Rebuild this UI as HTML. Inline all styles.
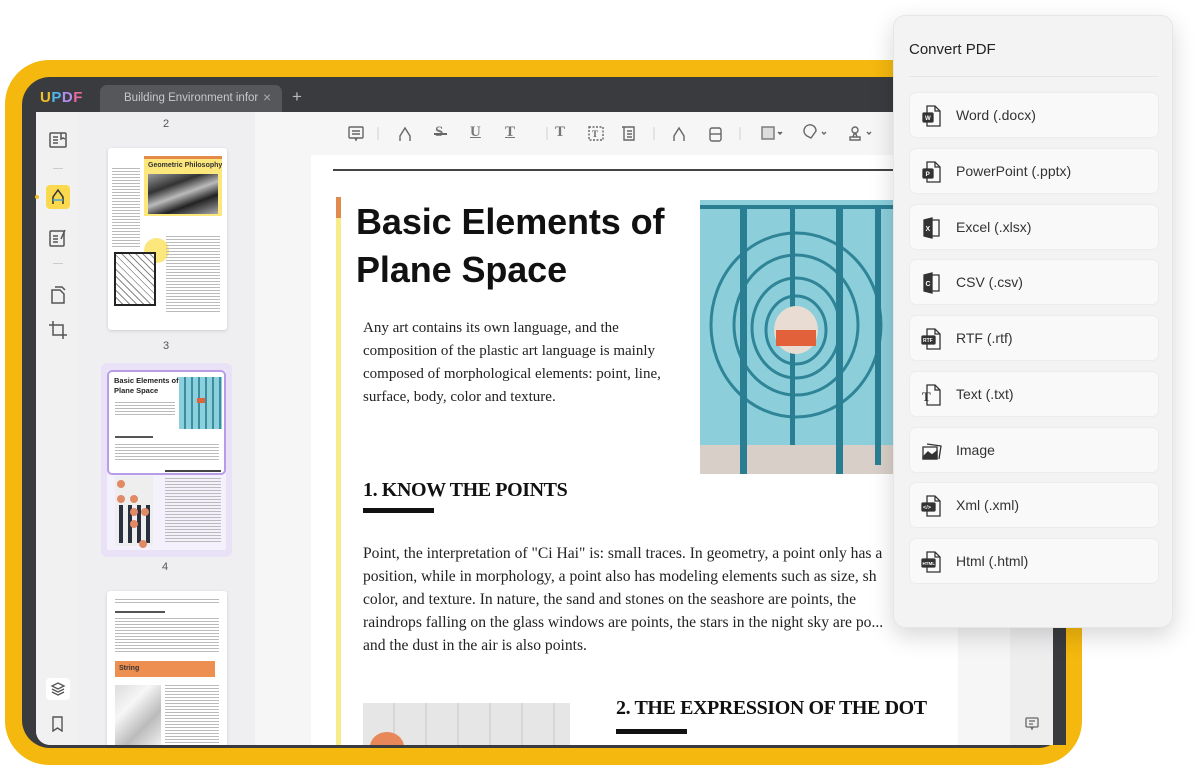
<!DOCTYPE html>
<html><head><meta charset="utf-8"><style>
*{margin:0;padding:0;box-sizing:border-box}
body{width:1200px;height:771px;background:#fff;position:relative;overflow:hidden;font-family:"Liberation Sans",sans-serif}
.a{position:absolute}
.frame{left:5px;top:60px;width:1077px;height:705px;background:#f4b80e;border-radius:44px}
.bezel{left:22px;top:77px;width:1044px;height:671px;background:#3a3b3e;border-radius:28px}
.content{left:36px;top:112px;width:1017px;height:633px;background:#f4f4f5;overflow:hidden;border-bottom-left-radius:14px}
.tl{background:#f1f1f2}
.thumbp{background:#efeff1}
.ser{font-family:"Liberation Serif","DejaVu Serif",serif;color:#222}
.item{position:absolute;left:15px;width:250px;height:46px;background:#f9f9f9;border-radius:7px;border:1px solid #ececec;font-size:14px;color:#333;line-height:44px;padding-left:46px}
.item svg{position:absolute;left:10px;top:11px}
.tb{position:absolute;top:124px;color:#777;font-size:15px;font-weight:bold;font-family:"Liberation Serif",serif}
.bars{background:repeating-linear-gradient(#bbb 0 1px,transparent 1px 3px)}
.h2{font-family:"Liberation Serif",serif;font-weight:bold;color:#111;white-space:nowrap;letter-spacing:-0.4px}
</style></head><body>
<div class="a frame"></div>
<div class="a bezel"></div>
<div class="a" style="left:40px;top:89px;font-size:15px;font-weight:bold;letter-spacing:0.5px"><span style="color:#f3c12b">U</span><span style="color:#4fb6f0">P</span><span style="color:#b38cf0">D</span><span style="color:#e86a9c">F</span></div>
<div class="a" style="left:100px;top:85px;width:182px;height:27px;background:#56575a;border-radius:7px 7px 0 0"></div>
<div class="a" style="left:124px;top:92px;font-size:11.5px;color:#c8c8c8;white-space:nowrap;width:134px;overflow:hidden">Building Environment infor</div>
<div class="a" style="left:263px;top:89px;font-size:14px;color:#aaa">×</div>
<div class="a" style="left:292px;top:87px;font-size:17px;color:#bbb">+</div>
<div class="a content">
  <div class="a tl" style="left:0;top:0;width:42px;height:633px"></div>
  <div class="a thumbp" style="left:42px;top:0;width:177px;height:633px"></div>
  <div class="a" style="left:219px;top:0;width:755px;height:43px;background:#f6f6f7"></div>
  <div class="a" style="left:219px;top:43px;width:56px;height:590px;background:#f6f6f7"></div>
  <div class="a" style="left:922px;top:43px;width:52px;height:590px;background:#f6f6f7"></div>
  <div class="a" style="left:974px;top:0;width:43px;height:633px;background:#eeeeef"></div>
</div>
<div class="a" style="left:1053px;top:112px;width:13px;height:633px;background:#3a3b3e"></div>
<svg class="a" style="left:48px;top:130px" width="20" height="20" viewBox="0 0 20 20" fill="none" stroke="#555" stroke-width="1.5"><rect x="2" y="3" width="16" height="14" rx="1"/><path d="M5 7h5M5 10h5M5 13h5M13 3v6l2-1 2 1"/></svg>
<div class="a" style="left:53px;top:168px;width:10px;height:1px;background:#ccc"></div>
<div class="a" style="left:46px;top:185px;width:24px;height:24px;background:#fbd94f;border-radius:4px"></div>
<svg class="a" style="left:50px;top:188px" width="16" height="18" viewBox="0 0 16 18" fill="none" stroke="#333" stroke-width="1.5"><path d="M3 16V9l5-7 5 7v7"/><path d="M3 12h10" stroke="#4aa7d6"/></svg>
<div class="a" style="left:35px;top:195px;width:4px;height:4px;border-radius:2px;background:#f4c21f"></div>
<svg class="a" style="left:48px;top:228px" width="20" height="20" viewBox="0 0 20 20" fill="none" stroke="#555" stroke-width="1.5"><rect x="2" y="3" width="14" height="15" rx="1"/><path d="M5 8h5M5 11h5M5 14h5M17 2l-4 9"/></svg>
<div class="a" style="left:53px;top:263px;width:10px;height:1px;background:#ccc"></div>
<svg class="a" style="left:48px;top:285px" width="20" height="20" viewBox="0 0 20 20" fill="none" stroke="#555" stroke-width="1.5"><path d="M4 5h8l4 4v9H4z"/><path d="M7 2h7l3 3"/></svg>
<svg class="a" style="left:48px;top:320px" width="20" height="20" viewBox="0 0 20 20" fill="none" stroke="#555" stroke-width="1.5"><path d="M5 1v14h14M1 5h14v14"/></svg>
<div class="a" style="left:46px;top:678px;width:24px;height:22px;background:#fff;border-radius:4px"></div>
<svg class="a" style="left:50px;top:681px" width="16" height="16" viewBox="0 0 16 16" fill="none" stroke="#555" stroke-width="1.3"><path d="M8 2l6 3-6 3-6-3zM2 8l6 3 6-3M2 11l6 3 6-3"/></svg>
<svg class="a" style="left:51px;top:716px" width="13" height="16" viewBox="0 0 13 16" fill="none" stroke="#555" stroke-width="1.4"><path d="M2 1h9v14l-4.5-3L2 15z"/></svg>
<div class="a" style="left:163px;top:118px;font-size:11px;color:#555">2</div>
<div class="a" style="left:108px;top:148px;width:119px;height:182px;background:#fff;border-radius:3px;box-shadow:0 1px 3px rgba(0,0,0,.15)">
  <div class="a" style="left:36px;top:8px;width:78px;height:60px;background:#fbe77c"></div>
  <div class="a" style="left:36px;top:8px;width:78px;height:3px;background:#e48a4b"></div>
  <div class="a" style="left:40px;top:14px;font-size:7px;font-weight:bold;color:#333">Geometric Philosophy</div>
  <div class="a" style="left:40px;top:26px;width:70px;height:40px;background:linear-gradient(160deg,#999,#333 30%,#bbb 50%,#222 70%,#aaa)"></div>
  <div class="a bars" style="left:4px;top:20px;width:28px;height:80px"></div>
  <div class="a" style="left:36px;top:90px;width:25px;height:25px;border-radius:50%;background:#fbe77c"></div>
  <div class="a" style="left:6px;top:104px;width:42px;height:54px;border:2px solid #222;background:repeating-linear-gradient(45deg,#fff 0 4px,#888 4px 5px)"></div>
  <div class="a bars" style="left:58px;top:88px;width:54px;height:78px"></div>
</div>
<div class="a" style="left:163px;top:340px;font-size:11px;color:#555">3</div>
<div class="a" style="left:101px;top:363px;width:131px;height:194px;background:#e9e2f7;border-radius:6px"></div>
<div class="a" style="left:107px;top:370px;width:119px;height:180px;background:#f4f0fc;border-radius:2px">
  <div class="a" style="left:0;top:0;width:119px;height:105px;background:#fff;border:2px solid #b79ce8;border-radius:5px"></div>
  <div class="a" style="left:7px;top:6px;font-size:7.5px;font-weight:bold;color:#222;line-height:10px">Basic Elements of<br>Plane Space</div>
  <div class="a" style="left:72px;top:7px;width:43px;height:52px;background:repeating-linear-gradient(90deg,#8cd0dd 0 5px,#3a8ea0 5px 7px)"></div>
  <div class="a" style="left:90px;top:28px;width:8px;height:5px;background:#e0643a"></div>
  <div class="a bars" style="left:8px;top:32px;width:60px;height:14px"></div>
  <div class="a" style="left:8px;top:66px;width:38px;height:2px;background:#555"></div>
  <div class="a bars" style="left:8px;top:74px;width:104px;height:18px"></div>
  <div class="a" style="left:58px;top:100px;width:56px;height:2px;background:#444"></div>
  <div class="a bars" style="left:58px;top:108px;width:56px;height:66px"></div>
  <div class="a" style="left:8px;top:106px;width:38px;height:70px;background:#eee"></div>
  <div class="a" style="left:12px;top:135px;width:4px;height:38px;background:#2b3040;box-shadow:9px 0 #2b3040,18px 0 #2b3040,27px 0 #2b3040"></div>
  <div class="a" style="left:10px;top:110px;width:8px;height:8px;border-radius:50%;background:#e08a66;box-shadow:0 15px #e08a66,13px 15px #e08a66,13px 28px #e08a66,24px 28px #e08a66,13px 40px #e08a66,22px 60px #e08a66"></div>
</div>
<div class="a" style="left:162px;top:561px;font-size:11px;color:#555">4</div>
<div class="a" style="left:107px;top:591px;width:120px;height:154px;background:#fff;border-radius:3px 3px 0 0;box-shadow:0 1px 3px rgba(0,0,0,.15);overflow:hidden">
  <div class="a bars" style="left:8px;top:8px;width:104px;height:6px"></div>
  <div class="a" style="left:8px;top:20px;width:50px;height:2px;background:#555"></div>
  <div class="a bars" style="left:8px;top:27px;width:104px;height:34px"></div>
  <div class="a" style="left:8px;top:70px;width:100px;height:16px;background:#ee8f52;font-size:7px;font-weight:bold;color:#333;line-height:16px;padding-left:4px">String</div>
  <div class="a" style="left:8px;top:94px;width:46px;height:60px;background:linear-gradient(135deg,#ddd,#f6f6f6,#bbb,#eee)"></div>
  <div class="a bars" style="left:58px;top:94px;width:54px;height:60px"></div>
</div>
<svg class="a" style="left:0;top:0" width="900" height="150" fill="none" stroke="#666" stroke-width="1.4">
  <rect x="349" y="127" width="14" height="11" rx="1"/><path d="M352 131h8M352 134h8M355 138l1 2 1-2"/>
  <path d="M378 127v13" stroke="#ddd"/>
  <path d="M400 141v-5l5-8 5 8v5"/>
  <path d="M674 141v-5l5-8 5 8v5"/>
  <rect x="710" y="128" width="11" height="13" rx="2"/><path d="M710 134h11"/>
  <path d="M547 127v13M654 127v13M740 127v13" stroke="#ddd"/>
  <rect x="762" y="127" width="12" height="12" fill="#ddd" stroke="#777"/><path d="M778 132l2 2 2-2" fill="#666"/>
  <path d="M807 136a6 6 0 1 1 9-5l-5 7z"/><path d="M822 132l2 2 2-2"/>
  <circle cx="855" cy="130" r="3"/><path d="M850 140h10v-3h-10zM853 137l1-3h2l1 3"/><path d="M867 132l2 2 2-2"/>
  <rect x="589" y="127" width="14" height="13" stroke-dasharray="2 1.5"/>
  <path d="M624 127h10v13h-10zM627 131h5M627 134h5M627 137h5M622 127h2"/>
</svg>
<div class="tb" style="left:435px">S</div><div class="a" style="left:434px;top:133px;width:13px;height:1.5px;background:#666"></div>
<div class="tb" style="left:470px;text-decoration:underline">U</div>
<div class="tb" style="left:505px;text-decoration:underline">T</div>
<div class="tb" style="left:555px">T</div>
<div class="a" style="left:592px;top:129px;font-size:9px;font-weight:bold;color:#666;font-family:'Liberation Serif',serif">T</div>
<div class="a" style="left:311px;top:155px;width:647px;height:590px;background:#fff;overflow:hidden">
  <div class="a" style="left:22px;top:14px;width:625px;height:2px;background:#444"></div>
  <div class="a" style="left:25px;top:42px;width:5px;height:548px;background:#f9ea8a"></div>
  <div class="a" style="left:25px;top:42px;width:5px;height:21px;background:#e08a50"></div>
  <div class="a" style="left:52px;top:548px;width:207px;height:50px;background:repeating-linear-gradient(90deg,#e6e6e6 0 30px,#d6d6d6 30px 32px)"></div>
  <div class="a" style="left:59px;top:577px;width:34px;height:30px;border-radius:50%;background:#e8875a"></div>
</div>
<div class="a" style="left:356px;top:198px;font-size:36px;font-weight:bold;line-height:48px;color:#111;letter-spacing:-0.1px">Basic Elements of<br>Plane Space</div>
<div class="a ser" style="left:363px;top:317px;font-size:15px;line-height:23px;width:330px">Any art contains its own language, and the composition of the plastic art language is mainly composed of morphological elements: point, line, surface, body, color and texture.</div>
<svg class="a" style="left:700px;top:200px" width="193" height="274" viewBox="0 0 193 274">
  <rect width="193" height="274" fill="#8ccfdb"/>
  <rect y="245" width="193" height="29" fill="#d8d0c8"/>
  <g fill="none" stroke="#2f8597" stroke-width="3">
    <ellipse cx="96" cy="125" rx="85" ry="92"/><ellipse cx="96" cy="125" rx="62" ry="70"/><ellipse cx="96" cy="128" rx="44" ry="50"/><ellipse cx="96" cy="130" rx="30" ry="34"/>
  </g>
  <g fill="#2a7e92"><rect x="40" y="5" width="7" height="269"/><rect x="90" y="5" width="5" height="240"/><rect x="136" y="5" width="7" height="269"/><rect x="175" y="5" width="6" height="260"/><rect x="0" y="5" width="193" height="4"/></g>
  <ellipse cx="96" cy="130" rx="22" ry="24" fill="#e8dcd3"/><rect x="76" y="130" width="40" height="16" fill="#e2603a"/>
</svg>
<div class="a h2" style="left:363px;top:479px;font-size:20px">1. KNOW THE POINTS</div>
<div class="a" style="left:363px;top:508px;width:71px;height:5px;background:#111"></div>
<div class="a ser" style="left:363px;top:542px;font-size:15.6px;line-height:23px;width:600px;white-space:nowrap">Point, the interpretation of "Ci Hai" is: small traces. In geometry, a point only has a<br>position, while in morphology, a point also has modeling elements such as size, sh<br>color, and texture. In nature, the sand and stones on the seashore are points, the<br>raindrops falling on the glass windows are points, the stars in the night sky are po...<br>and the dust in the air is also points.</div>
<div class="a h2" style="left:616px;top:697px;font-size:20px">2. THE EXPRESSION OF THE DOT</div>
<div class="a" style="left:616px;top:729px;width:71px;height:5px;background:#111"></div>
<svg class="a" style="left:1025px;top:717px" width="14" height="14" fill="none" stroke="#666" stroke-width="1.3"><rect x="1" y="1" width="12" height="9" rx="1"/><path d="M4 4h6M4 7h4M6 10l1 2 1-2"/></svg>
<div class="a" style="left:893px;top:15px;width:280px;height:613px;background:#f3f3f3;border-radius:12px;box-shadow:0 8px 24px rgba(0,0,0,.16);border:1px solid #e6e6e6">
  <div class="a" style="left:15px;top:25px;font-size:15px;color:#222">Convert PDF</div>
  <div class="a" style="left:15px;top:60px;width:250px;height:1px;background:#e6e6e6"></div>
  <div class="item" style="top:76px"><svg width="24" height="24" viewBox="0 0 24 24" fill="none" stroke="#333" stroke-width="1.3"><path d="M7 2h8l5 5v15H7z"/><path d="M15 2v5h5"/><rect x="3" y="9" width="10" height="9" rx="1" fill="#333"/><text x="5" y="16" font-size="6" fill="#fff" stroke="none" font-family="Liberation Sans" font-weight="bold">W</text></svg>Word (.docx)</div>
  <div class="item" style="top:132px"><svg width="24" height="24" viewBox="0 0 24 24" fill="none" stroke="#333" stroke-width="1.3"><path d="M7 2h8l5 5v15H7z"/><path d="M15 2v5h5"/><rect x="3" y="9" width="10" height="9" rx="1" fill="#333"/><text x="5.5" y="16" font-size="6.5" fill="#fff" stroke="none" font-family="Liberation Sans" font-weight="bold">P</text></svg>PowerPoint (.pptx)</div>
  <div class="item" style="top:188px"><svg width="24" height="24" viewBox="0 0 24 24" fill="none" stroke="#333" stroke-width="1.3"><path d="M10 4h9v16h-9"/><path d="M4 4l8-2v20l-8-2z" fill="#333"/><text x="5.5" y="15" font-size="7" fill="#fff" stroke="none" font-family="Liberation Sans" font-weight="bold">X</text></svg>Excel (.xlsx)</div>
  <div class="item" style="top:243px"><svg width="24" height="24" viewBox="0 0 24 24" fill="none" stroke="#333" stroke-width="1.3"><path d="M10 4h9v16h-9"/><path d="M4 4l8-2v20l-8-2z" fill="#333"/><text x="5.5" y="15" font-size="7" fill="#fff" stroke="none" font-family="Liberation Sans" font-weight="bold">C</text></svg>CSV (.csv)</div>
  <div class="item" style="top:299px"><svg width="24" height="24" viewBox="0 0 24 24" fill="none" stroke="#333" stroke-width="1.3"><path d="M7 2h8l5 5v15H7z"/><path d="M15 2v5h5"/><rect x="2" y="9" width="13" height="8" rx="1" fill="#333"/><text x="3" y="15" font-size="5" fill="#fff" stroke="none" font-family="Liberation Sans" font-weight="bold">RTF</text></svg>RTF (.rtf)</div>
  <div class="item" style="top:355px"><svg width="24" height="24" viewBox="0 0 24 24" fill="none" stroke="#333" stroke-width="1.3"><path d="M7 2h8l5 5v15H7z"/><path d="M15 2v5h5"/><text x="2" y="18" font-size="13" fill="#333" stroke="none" font-family="Liberation Serif" font-weight="bold">T</text></svg>Text (.txt)</div>
  <div class="item" style="top:411px"><svg width="24" height="24" viewBox="0 0 24 24" fill="none" stroke="#333" stroke-width="1.3"><path d="M3 8h14v12H3z"/><path d="M7 5l14 2-2 13"/><path d="M3 18l5-5 4 3 5-4v8H3z" fill="#333"/></svg>Image</div>
  <div class="item" style="top:466px"><svg width="24" height="24" viewBox="0 0 24 24" fill="none" stroke="#333" stroke-width="1.3"><path d="M7 2h8l5 5v15H7z"/><path d="M15 2v5h5"/><rect x="2" y="9" width="13" height="8" rx="1" fill="#333"/><text x="3" y="15" font-size="5.5" fill="#fff" stroke="none" font-family="Liberation Sans" font-weight="bold">&lt;/&gt;</text></svg>Xml (.xml)</div>
  <div class="item" style="top:522px"><svg width="24" height="24" viewBox="0 0 24 24" fill="none" stroke="#333" stroke-width="1.3"><path d="M7 2h8l5 5v15H7z"/><path d="M15 2v5h5"/><rect x="2" y="9" width="13" height="8" rx="1" fill="#333"/><text x="2.5" y="15" font-size="4.5" fill="#fff" stroke="none" font-family="Liberation Sans" font-weight="bold">HTML</text></svg>Html (.html)</div>
</div>
</body></html>
